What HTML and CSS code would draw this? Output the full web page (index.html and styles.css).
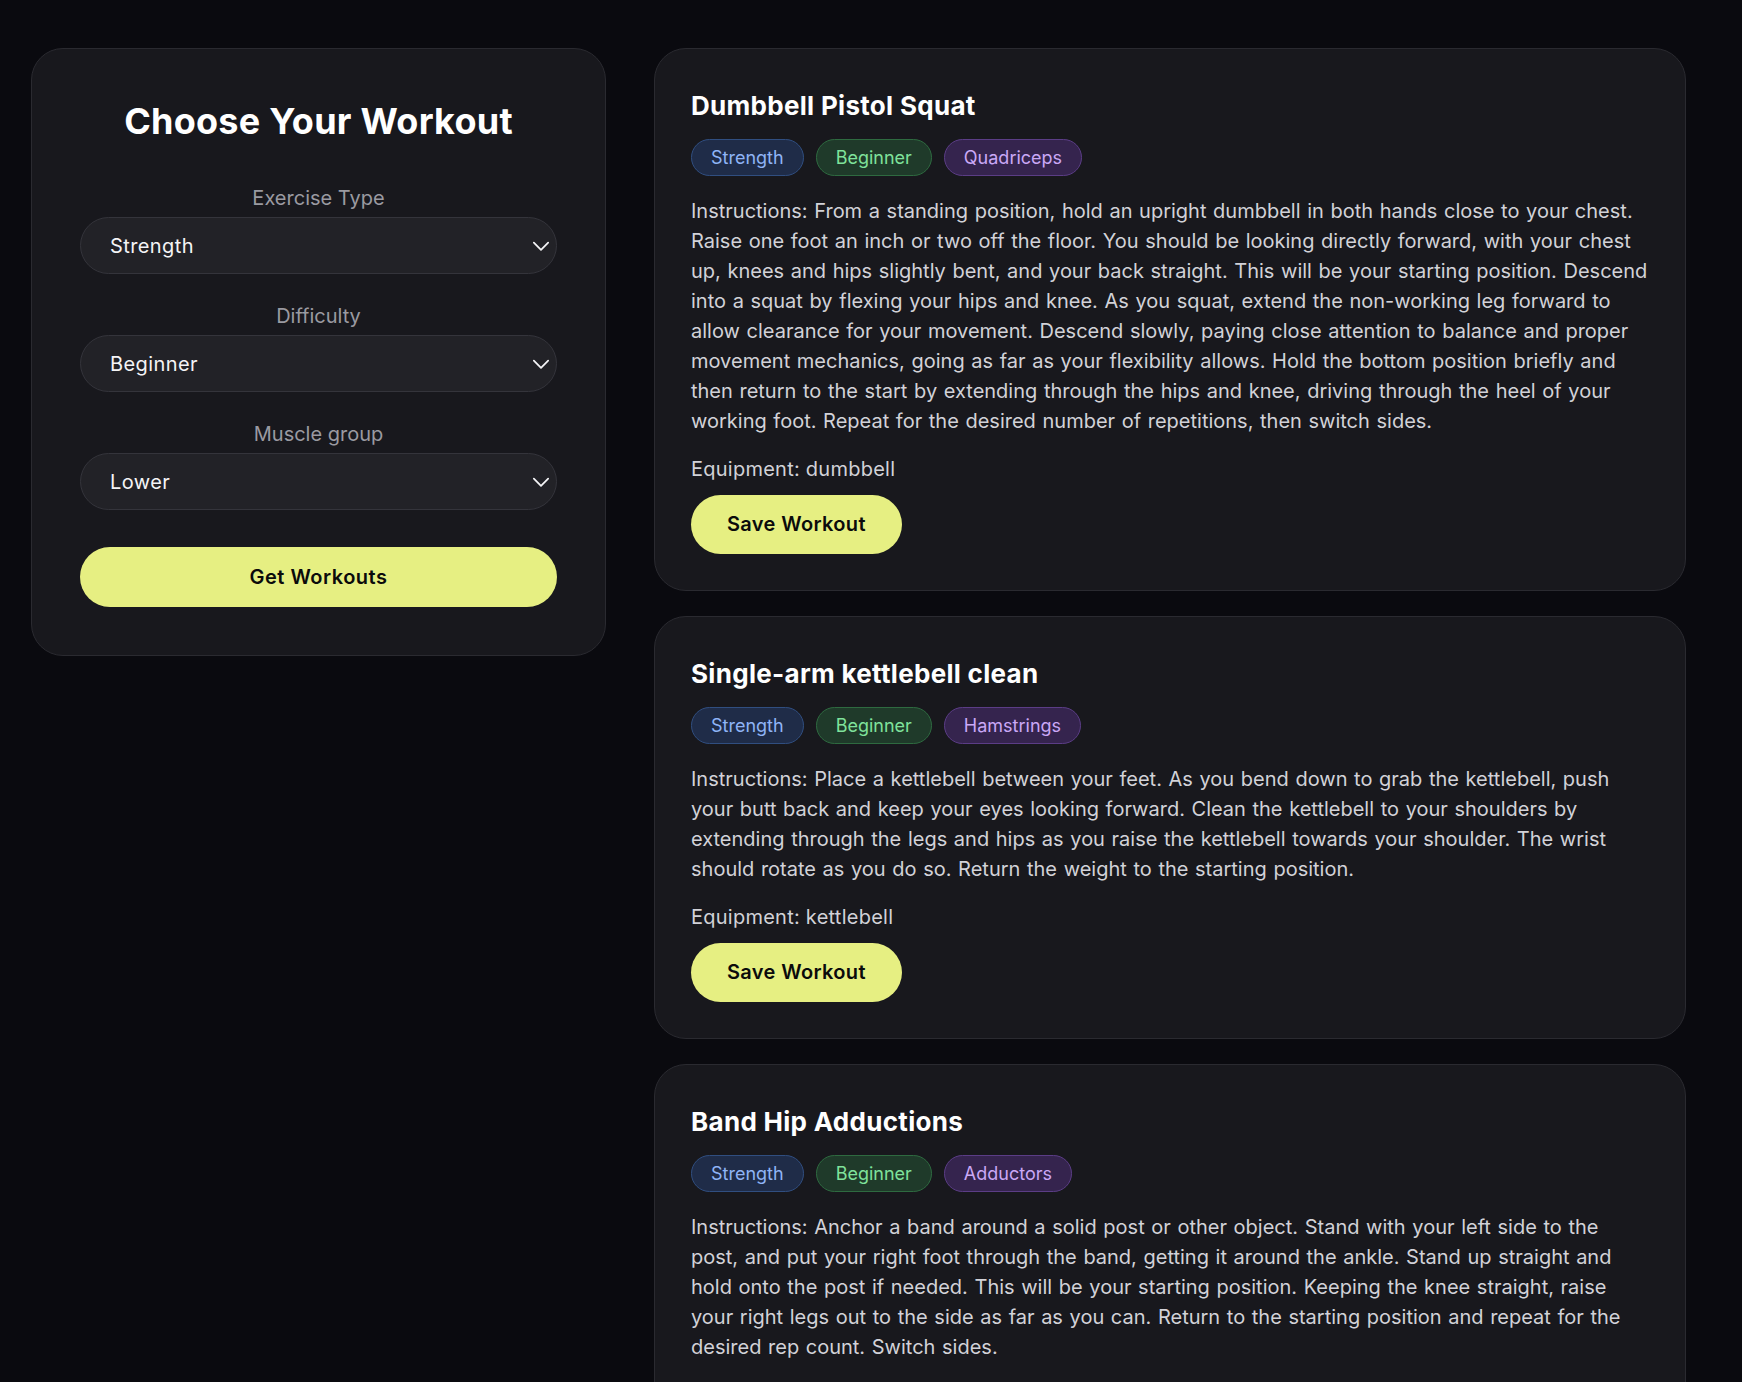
FILE: index.html
```html
<!DOCTYPE html>
<html lang="en">
<head>
<meta charset="utf-8">
<title>Workout Finder</title>
<link rel="stylesheet" href="styles.css">
</head>
<body>
<main class="layout">
  <aside class="picker">
    <h1 class="picker-title">Choose Your Workout</h1>
    <form class="picker-form">
      <label class="field">
        <span class="field-label">Exercise Type</span>
        <span class="select-wrap">
          <select class="select">
            <option>Strength</option>
            <option>Cardio</option>
            <option>Stretching</option>
            <option>Plyometrics</option>
          </select>
          <svg class="chevron" viewBox="0 0 16 10" aria-hidden="true"><path d="M1.5 1.5 L8 8 L14.5 1.5"/></svg>
        </span>
      </label>
      <label class="field">
        <span class="field-label">Difficulty</span>
        <span class="select-wrap">
          <select class="select">
            <option>Beginner</option>
            <option>Intermediate</option>
            <option>Expert</option>
          </select>
          <svg class="chevron" viewBox="0 0 16 10" aria-hidden="true"><path d="M1.5 1.5 L8 8 L14.5 1.5"/></svg>
        </span>
      </label>
      <label class="field">
        <span class="field-label">Muscle group</span>
        <span class="select-wrap">
          <select class="select">
            <option>Lower</option>
            <option>Upper</option>
            <option>Core</option>
          </select>
          <svg class="chevron" viewBox="0 0 16 10" aria-hidden="true"><path d="M1.5 1.5 L8 8 L14.5 1.5"/></svg>
        </span>
      </label>
      <button type="button" class="btn btn-wide">Get Workouts</button>
    </form>
  </aside>

  <section class="results">
    <article class="card">
      <h2 class="card-title">Dumbbell Pistol Squat</h2>
      <div class="tags">
        <span class="tag tag-type">Strength</span>
        <span class="tag tag-level">Beginner</span>
        <span class="tag tag-muscle">Quadriceps</span>
      </div>
      <p class="card-text">Instructions: From a standing position, hold an upright dumbbell in both hands close to your chest. Raise one foot an inch or two off the floor. You should be looking directly forward, with your chest up, knees and hips slightly bent, and your back straight. This will be your starting position. Descend into a squat by flexing your hips and knee. As you squat, extend the non-working leg forward to allow clearance for your movement. Descend slowly, paying close attention to balance and proper movement mechanics, going as far as your flexibility allows. Hold the bottom position briefly and then return to the start by extending through the hips and knee, driving through the heel of your working foot. Repeat for the desired number of repetitions, then switch sides.</p>
      <p class="card-equip">Equipment: dumbbell</p>
      <button type="button" class="btn">Save Workout</button>
    </article>

    <article class="card">
      <h2 class="card-title">Single-arm kettlebell clean</h2>
      <div class="tags">
        <span class="tag tag-type">Strength</span>
        <span class="tag tag-level">Beginner</span>
        <span class="tag tag-muscle">Hamstrings</span>
      </div>
      <p class="card-text">Instructions: Place a kettlebell between your feet. As you bend down to grab the kettlebell, push your butt back and keep your eyes looking forward. Clean the kettlebell to your shoulders by extending through the legs and hips as you raise the kettlebell towards your shoulder. The wrist should rotate as you do so. Return the weight to the starting position.</p>
      <p class="card-equip">Equipment: kettlebell</p>
      <button type="button" class="btn">Save Workout</button>
    </article>

    <article class="card">
      <h2 class="card-title">Band Hip Adductions</h2>
      <div class="tags">
        <span class="tag tag-type">Strength</span>
        <span class="tag tag-level">Beginner</span>
        <span class="tag tag-muscle">Adductors</span>
      </div>
      <p class="card-text">Instructions: Anchor a band around a solid post or other object. Stand with your left side to the post, and put your right foot through the band, getting it around the ankle. Stand up straight and hold onto the post if needed. This will be your starting position. Keeping the knee straight, raise your right legs out to the side as far as you can. Return to the starting position and repeat for the desired rep count. Switch sides.</p>
      <p class="card-equip">Equipment: bands</p>
      <button type="button" class="btn">Save Workout</button>
    </article>
  </section>
</main>
</body>
</html>
```

FILE: styles.css
```css
* {
  box-sizing: border-box;
}

html,
body {
  margin: 0;
  background: #0a0a0f;
}

body {
  font-family: Inter, "Noto Sans", "Liberation Sans", sans-serif;
  color: #f2f2f4;
}

.layout {
  display: grid;
  grid-template-columns: 575px 1fr;
  gap: 48px;
  align-items: start;
  padding: 48px 56px 48px 31px;
}

/* ---------- filter panel ---------- */

.picker {
  background: #18181d;
  border: 1px solid #2a2a30;
  border-radius: 32px;
  padding: 48px;
}

.picker-title {
  margin: 2px 0 41px;
  font-size: 36px;
  line-height: 44px;
  font-weight: 700;
  letter-spacing: 0.25px;
  text-align: center;
  color: #ffffff;
}

.picker-form {
  display: flex;
  flex-direction: column;
}

.field {
  display: flex;
  flex-direction: column;
  gap: 5px;
  margin-bottom: 28px;
}

.field-label {
  font-size: 20px;
  line-height: 28px;
  color: #9a9aa1;
  text-align: center;
}

.select-wrap {
  position: relative;
  display: block;
}

.select {
  display: block;
  width: 100%;
  height: 57px;
  padding: 0 48px 0 29px;
  appearance: none;
  -webkit-appearance: none;
  background: #222227;
  border: 1px solid #34343b;
  border-radius: 999px;
  color: #f4f4f6;
  font-family: inherit;
  font-size: 20px;
  letter-spacing: 0.4px;
}

.chevron {
  position: absolute;
  right: 7px;
  top: 50%;
  width: 18px;
  height: 11px;
  margin-top: -5px;
  fill: none;
  stroke: #f4f4f6;
  stroke-width: 1.6;
  stroke-linecap: round;
  stroke-linejoin: round;
  pointer-events: none;
}

/* ---------- buttons ---------- */

.btn {
  display: inline-block;
  padding: 15px 36px;
  border: 0;
  border-radius: 999px;
  background: #e6ef82;
  color: #0b0b0b;
  font-family: inherit;
  font-size: 20px;
  line-height: 29px;
  font-weight: 600;
  letter-spacing: 0.35px;
  cursor: pointer;
}

.btn-wide {
  width: 100%;
  margin-top: 9px;
  padding: 16px 36px;
  line-height: 28px;
  letter-spacing: 0.5px;
}

/* ---------- result cards ---------- */

.results {
  display: flex;
  flex-direction: column;
  gap: 25px;
}

.card {
  background: #18181d;
  border: 1px solid #2a2a30;
  border-radius: 32px;
  padding: 36px;
}

.card-title {
  margin: 5px 0 17px;
  font-size: 26px;
  line-height: 32px;
  font-weight: 700;
  letter-spacing: 0.3px;
  color: #ffffff;
}

.tags {
  display: flex;
  gap: 12px;
  margin-bottom: 20px;
}

.tag {
  padding: 4px 19px;
  border: 1px solid;
  border-radius: 999px;
  font-size: 18px;
  line-height: 27px;
}

.tag-type {
  background: #1f2c48;
  border-color: #304e80;
  color: #8fb4f6;
}

.tag-level {
  background: #1f3a2a;
  border-color: #2e6a40;
  color: #7fe29b;
}

.tag-muscle {
  background: #35244e;
  border-color: #5b3d86;
  color: #caa8f6;
}

.card-text {
  margin: 0 0 18px;
  font-size: 20px;
  line-height: 30px;
  word-spacing: 1px;
  color: #d2d2d8;
}

.card-equip {
  margin: 0 0 11px;
  font-size: 20px;
  line-height: 30px;
  letter-spacing: 0.25px;
  color: #d2d2d8;
}
```
